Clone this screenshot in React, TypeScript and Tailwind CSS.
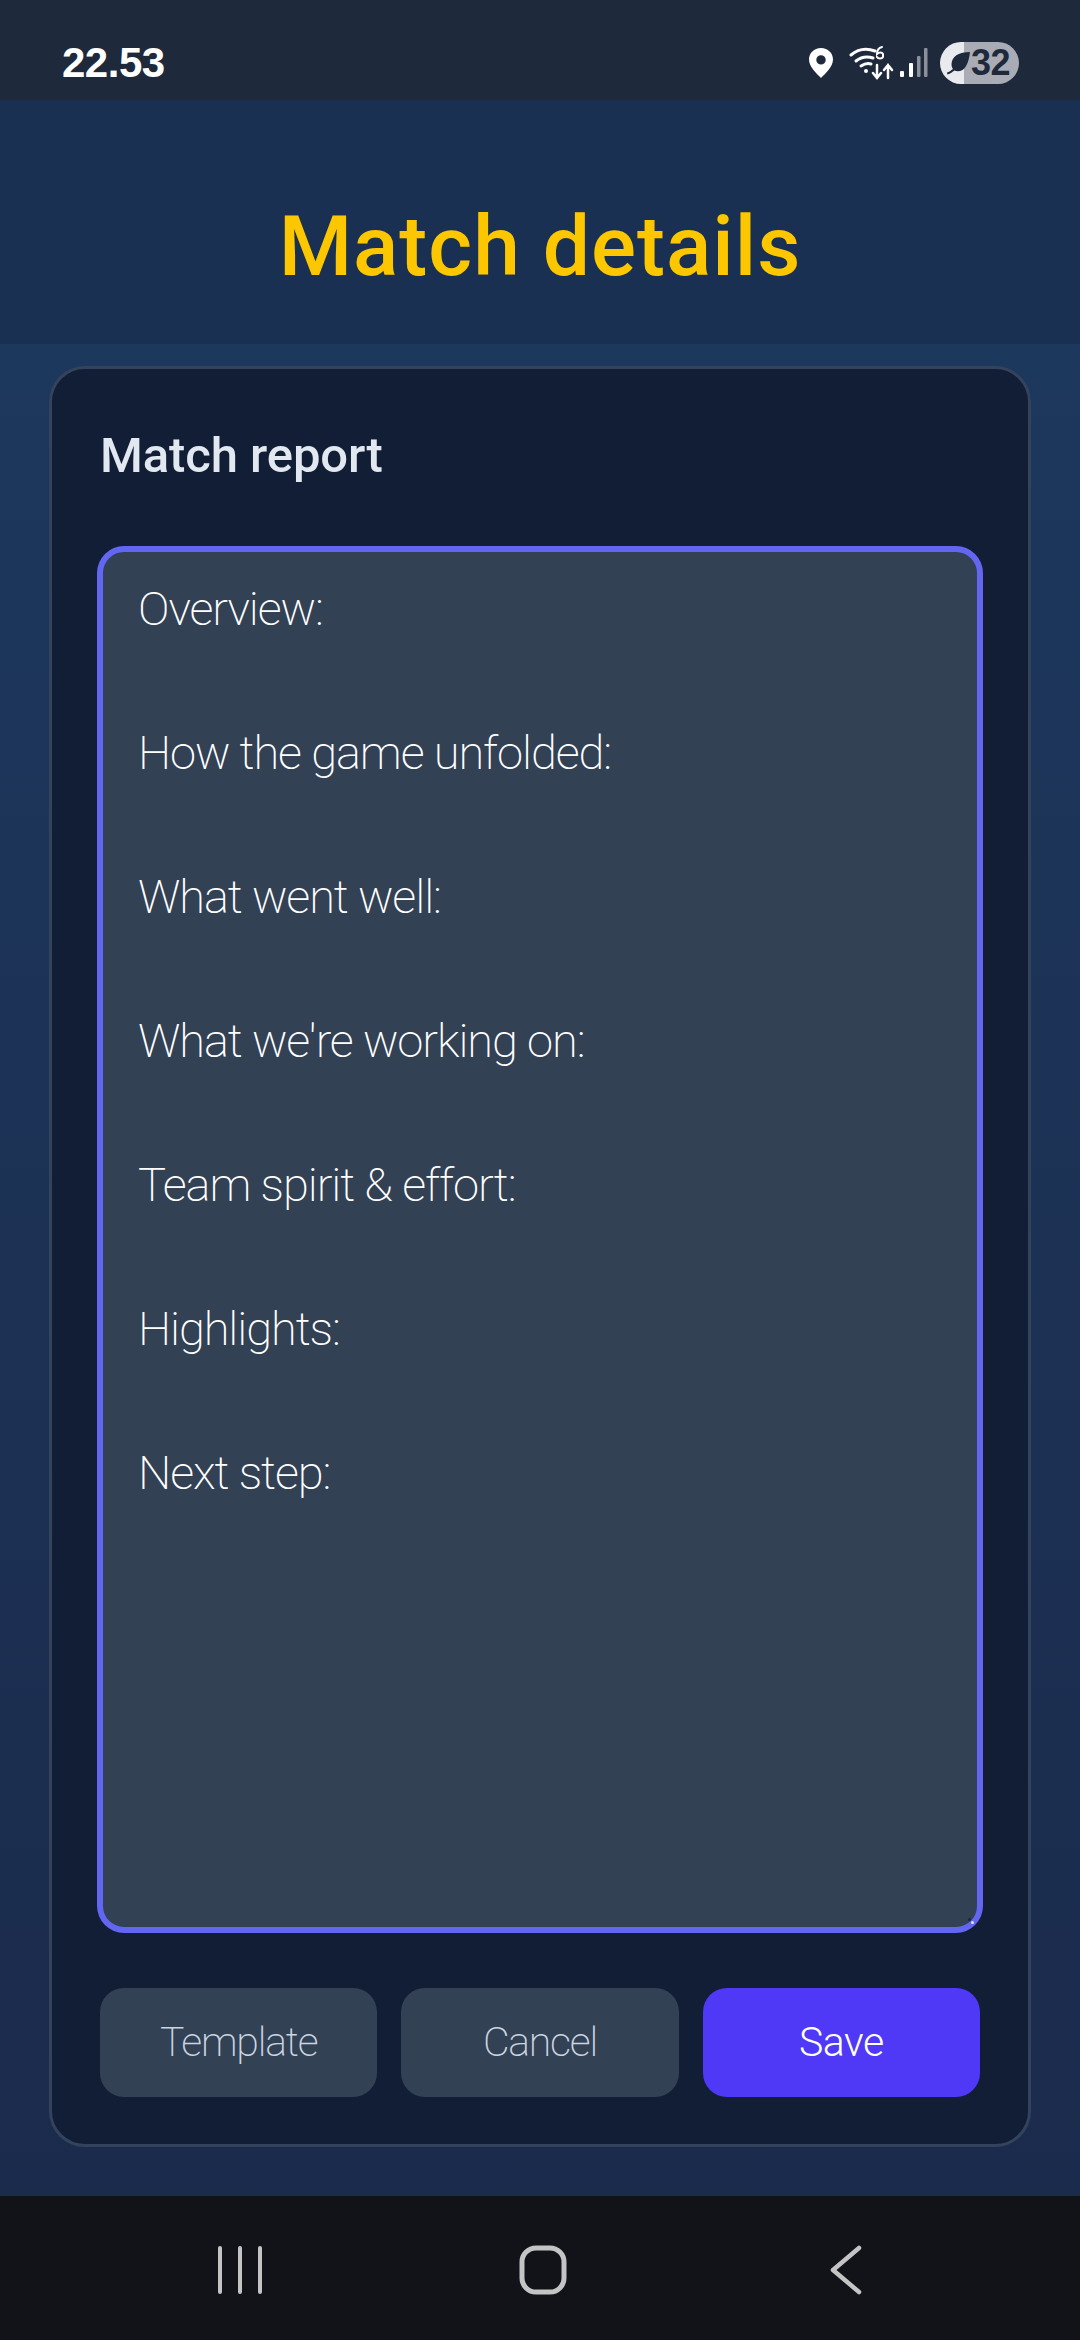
const report = `Overview:

How the game unfolded:

What went well:

What we're working on:

Team spirit & effort:

Highlights:

Next step:`;

const StatusIcons = () => (
  <div className="flex items-center">
    <svg width="26" height="32" viewBox="0 0 26 32" className="mr-[15px]">
      <path
        fillRule="evenodd"
        fill="#fff"
        d="M13 1C6 1 1 6.2 1 12.6 1 20 9 27 13 31c4-4 12-11 12-18.400C25 6.200 20 1 13 1Zm0 7.200a4.700 4.700 0 1 1 0 9.400 4.700 4.700 0 0 1 0-9.400Z"
      />
    </svg>
    <svg width="46" height="34" viewBox="0 0 46 34" fill="none" stroke="#fff" strokeLinecap="round" className="mr-[5px]">
      <path d="M2 9C9 3 18 2 26 5" strokeWidth="3" />
      <path d="M7 15c5-4 11-5 17-3" strokeWidth="3" />
      <path d="M12 20c3-2 7-3 10-2" strokeWidth="3" />
      <circle cx="17" cy="25" r="2" fill="#fff" stroke="none" />
      <path d="M28 11c1 2 5 2 6 0V8c-1-2-4-2-6 0 0-3 1-6 5-7" strokeWidth="2" />
      <path d="M28 19v13m-4-5 4 5 4-5" strokeWidth="2.500" />
      <path d="M39 32V19m-4 5 4-5 4 5" strokeWidth="2.500" />
    </svg>
    <svg width="28" height="30" viewBox="0 0 28 30" className="mr-[12px]">
      <rect x="0" y="23" width="4" height="6" rx="1" fill="#fff" />
      <rect x="9" y="15" width="4" height="14" rx="1" fill="#fff" />
      <rect x="17" y="8" width="3.500" height="21" rx="1" fill="#8b909a" />
      <rect x="24" y="0" width="3.500" height="29" rx="1" fill="#8b909a" />
    </svg>
    <div className="w-[79px] h-[42px] rounded-full bg-[linear-gradient(90deg,#e8eaee_31%,#a9acb5_31%)] flex items-center pl-[6px]">
      <svg width="26" height="28" viewBox="0 0 26 28" className="shrink-0">
        <path fill="#1e293b" d="M24 3C13 3 6 7 5.500 15c0 2 .5 4 1.500 5-2 1.500-4 3-6 3.500l.5 2c3-1 5-2.500 7-4 2 1 5 1 8-.5C21 18 23 11 24 3Z" />
      </svg>
      <span className="font-['Liberation_Sans',sans-serif] font-bold text-[36px] leading-none text-[#1e293b] tracking-[-0.5px] ml-[-1px]">
        32
      </span>
    </div>
  </div>
);

export default function App() {
  return (
    <div className="w-[1080px] h-[2340px] flex flex-col overflow-hidden font-['Roboto',sans-serif] bg-[linear-gradient(180deg,#1d3a60_0%,#1b2a4b_100%)]">
      <div className="h-[100px] shrink-0 bg-[#1e293b] flex items-center justify-between pl-[62px] pr-[61px] pt-[26px]">
        <span className="font-['Liberation_Sans',sans-serif] font-bold text-[42px] leading-none text-white tracking-[-0.5px]">
          22.53
        </span>
        <StatusIcons />
      </div>

      <div className="h-[244px] shrink-0 bg-[#193052] flex items-center justify-center pt-[50px]">
        <h1 className="text-[84px] leading-none font-medium text-[#fdc700] tracking-[1px]">
          Match details
        </h1>
      </div>

      <main className="flex-1 min-h-0 px-[49px] pt-[22px]">
        <section className="h-[1781px] rounded-[36px] border-[3px] border-[#33435c] bg-[#121d36] px-[48px] pt-[51px] flex flex-col">
          <h2 className="text-[49px] leading-[72px] font-medium text-[#e2e8f0] tracking-[-0.1px]">
            Match report
          </h2>
          <div className="relative mt-[57px]">
            <textarea
              readOnly
              defaultValue={report}
              className="block h-[1381px] w-full resize-none rounded-[24px] border-[3px] border-[#6366f1] ring-[3px] ring-[#6366f1] bg-[#334155] pl-[35px] pr-[36px] pt-[21px] pb-[24px] text-[47px] leading-[72px] font-extralight tracking-[-1.1px] text-white outline-none"
            />
            <span className="absolute right-[6px] bottom-[6px] w-[3px] h-[3px] rounded-full bg-[#e0e2ff]" />
            <span className="absolute right-[9px] bottom-[9px] w-[3px] h-[3px] rounded-full bg-[#1b2440]" />
          </div>
          <div className="mt-[58px] grid grid-cols-3 gap-[24px]">
            <button className="h-[109px] rounded-[24px] bg-[#334155] text-[41px] font-extralight tracking-[-1.2px] text-[#cbd5e1]">
              Template
            </button>
            <button className="h-[109px] rounded-[24px] bg-[#334155] text-[41px] font-extralight tracking-[-1.2px] text-[#cbd5e1]">
              Cancel
            </button>
            <button className="h-[109px] rounded-[24px] bg-[#4f39f6] text-[41px] font-light tracking-[-0.5px] text-white">
              Save
            </button>
          </div>
        </section>
      </main>

      <nav className="h-[144px] shrink-0 bg-[#111318] flex items-center">
        <div className="grid grid-cols-3 w-full pl-[88px] pr-[82px] items-center justify-items-center pt-[4px]">
          <svg width="44" height="48" viewBox="0 0 44 48" stroke="#c4c4c4" strokeWidth="4" strokeLinecap="round">
            <path d="M2 2v44M22 2v44M42 2v44" />
          </svg>
          <svg width="48" height="50" viewBox="0 0 48 50" fill="none" stroke="#c4c4c4" strokeWidth="5">
            <rect x="3" y="3" width="42" height="44" rx="14" />
          </svg>
          <svg width="32" height="50" viewBox="0 0 32 50" fill="none" stroke="#c4c4c4" strokeWidth="4.500" strokeLinecap="round" strokeLinejoin="round">
            <path d="M29 3 3 25l26 22" />
          </svg>
        </div>
      </nav>
    </div>
  );
}
